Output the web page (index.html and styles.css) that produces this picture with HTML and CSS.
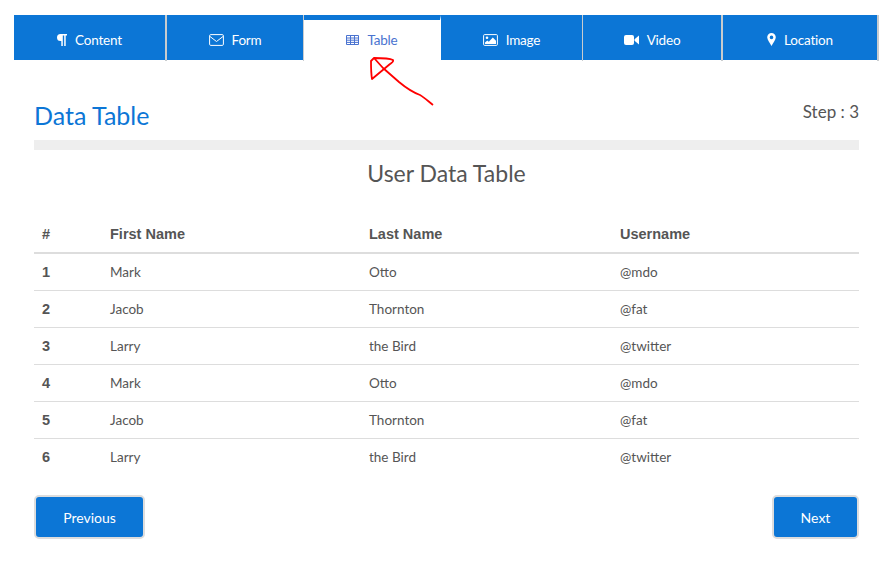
FILE: index.html
```html
<!DOCTYPE html>
<html lang="en">
<head>
<meta charset="utf-8">
<title>Data Table</title>
<link rel="stylesheet" href="styles.css">
</head>
<body>
<nav class="tabs">
  <a class="tab"><svg class="ico" viewBox="0 0 10 12"><path d="M3.500 0H10v1.500H8.700V12H7.200V1.500H5.800V12H4.300V7H3.500a3.500 3.500 0 0 1 0-7z"/></svg>Content</a>
  <a class="tab"><svg class="ico ico-w" viewBox="0 0 15 12"><rect x=".6" y=".6" width="13.800" height="10.800" rx="1.200" class="line"/><path d="M1 2.500l6.500 5 6.500-5" class="line"/></svg>Form</a>
  <a class="tab active"><svg class="ico ico-t" viewBox="0 0 13 10"><path d="M.5.500h12v9H.5zM.5 3h12M.5 5.200h12M.5 7.400h12M4.500 1v8.500M8.500 1v8.500" class="line"/></svg>Table</a>
  <a class="tab"><svg class="ico ico-w" viewBox="0 0 15 12"><rect x=".6" y=".6" width="13.800" height="10.800" rx="1" class="line"/><circle cx="4" cy="3.700" r="1.300"/><path d="M2 10V8.400l2.300-2 1.500 1.300L9.800 3.500 13 6.800V10z"/></svg>Image</a>
  <a class="tab"><svg class="ico ico-w" viewBox="0 0 15 12"><rect x="0" y="1" width="10" height="10" rx="2"/><path d="M10.500 5.200L15 1.500v9l-4.500-3.700z"/></svg>Video</a>
  <a class="tab"><svg class="ico ico-p" viewBox="0 0 9 13"><path fill-rule="evenodd" d="M4.500 0A4.300 4.300 0 0 0 .2 4.300C.2 6.800 3 10 4.500 13 6 10 8.800 6.800 8.800 4.300A4.300 4.300 0 0 0 4.500 0zm0 2.600a1.800 1.800 0 1 1 0 3.600 1.800 1.800 0 0 1 0-3.600z"/></svg>Location</a>
</nav>
<main class="panel">
  <header class="head">
    <h2 class="title">Data Table</h2>
    <span class="step">Step : 3</span>
  </header>
  <div class="bar"></div>
  <h3 class="sub">User Data Table</h3>
  <table class="data">
    <thead><tr><th>#</th><th>First Name</th><th>Last Name</th><th>Username</th></tr></thead>
    <tbody>
      <tr><th>1</th><td>Mark</td><td>Otto</td><td>@mdo</td></tr>
      <tr><th>2</th><td>Jacob</td><td>Thornton</td><td>@fat</td></tr>
      <tr><th>3</th><td>Larry</td><td>the Bird</td><td>@twitter</td></tr>
      <tr><th>4</th><td>Mark</td><td>Otto</td><td>@mdo</td></tr>
      <tr><th>5</th><td>Jacob</td><td>Thornton</td><td>@fat</td></tr>
      <tr><th>6</th><td>Larry</td><td>the Bird</td><td>@twitter</td></tr>
    </tbody>
  </table>
  <div class="actions">
    <button class="btn btn-prev">Previous</button>
    <button class="btn btn-next">Next</button>
  </div>
</main>
<svg class="scribble" viewBox="0 0 80 60" width="80" height="60"><path d="M14 3C20 3 29 3 33 5C34 7 31 8 30 9L12 24C11 18 11 10 11 6L14 3L23 13L39 27C45 32 52 37 60 40C65 43 69 47 73 50"/></svg>
</body>
</html>
```
FILE: styles.css
```css
* { box-sizing: border-box; }
body {
  margin: 0;
  background: #fff;
  color: #555;
  font-family: Lato, "Open Sans", sans-serif;
  font-size: 14px;
}
.tabs {
  display: grid;
  grid-template-columns: 153px 137px 137px 142px 140px 156px;
  margin: 15px 14px 0;
  height: 45px;
}
.tab {
  display: flex;
  align-items: center;
  justify-content: center;
  gap: 8px;
  height: 46px;
  padding: 4px 0 1px;
  background: linear-gradient(#0c76d6, #0c76d6) left top / 100% 45px no-repeat;
  color: #fff;
  font-size: 13.500px;
  letter-spacing: -.2px;
  border-right: 2px solid #c9ccce;
}
.tab:nth-child(2), .tab:nth-child(4) { border-right-width: 1px; }
.tab.active {
  height: 45px;
  background: #fff;
  color: #4a73d0;
  border-top: 5px solid #0c76d6;
  border-right: 1px solid #fff;
  padding: 0 0 1px;
}
.ico { width: 10px; height: 12px; fill: currentColor; }
.ico-w { width: 15px; height: 12px; }
.ico-t { width: 13px; height: 10px; }
.ico-p { width: 9px; height: 13px; }
.line { fill: none; stroke: currentColor; stroke-width: 1; }
.panel { padding: 0 34px; }
.head {
  display: flex;
  justify-content: space-between;
  margin-top: 40px;
  height: 40px;
}
.title {
  margin: 0;
  font-size: 25px;
  font-weight: 400;
  line-height: 30px;
  color: #0c76d6;
}
.step { font-size: 17px; line-height: 24px; color: #555; }
.bar { height: 10px; background: #eee; }
.sub {
  margin: 7px 0 0;
  font-size: 23px;
  font-weight: 400;
  line-height: 32px;
  text-align: center;
  color: #555;
}
.data {
  width: 825px;
  margin-top: 26px;
  border-collapse: collapse;
  table-layout: fixed;
}
.data th, .data td {
  height: 37px;
  padding: 0 8px;
  text-align: left;
  font-size: 13.500px;
  border-top: 1px solid #ddd;
}
.data th { font-family: "Liberation Sans", sans-serif; font-size: 14.500px; font-weight: 700; }
.data thead th { height: 38px; border-top: 0; border-bottom: 2px solid #ddd; }
.data tbody tr:first-child th, .data tbody tr:first-child td { border-top: 0; }
.data th:nth-child(1) { width: 68px; }
.data th:nth-child(2) { width: 259px; }
.data th:nth-child(3) { width: 251px; }
.actions {
  display: flex;
  justify-content: space-between;
  margin-top: 20px;
}
.btn {
  height: 44px;
  padding: 0;
  background: #0c76d6;
  color: #fff;
  border: 2px solid #ddd;
  border-radius: 5px;
  font: inherit;
}
.btn-prev { width: 111px; }
.btn-next { width: 87px; }
.scribble {
  position: absolute;
  left: 360px;
  top: 55px;
  fill: none;
  stroke: #f00;
  stroke-width: 1.800;
  stroke-linejoin: round;
}
```
